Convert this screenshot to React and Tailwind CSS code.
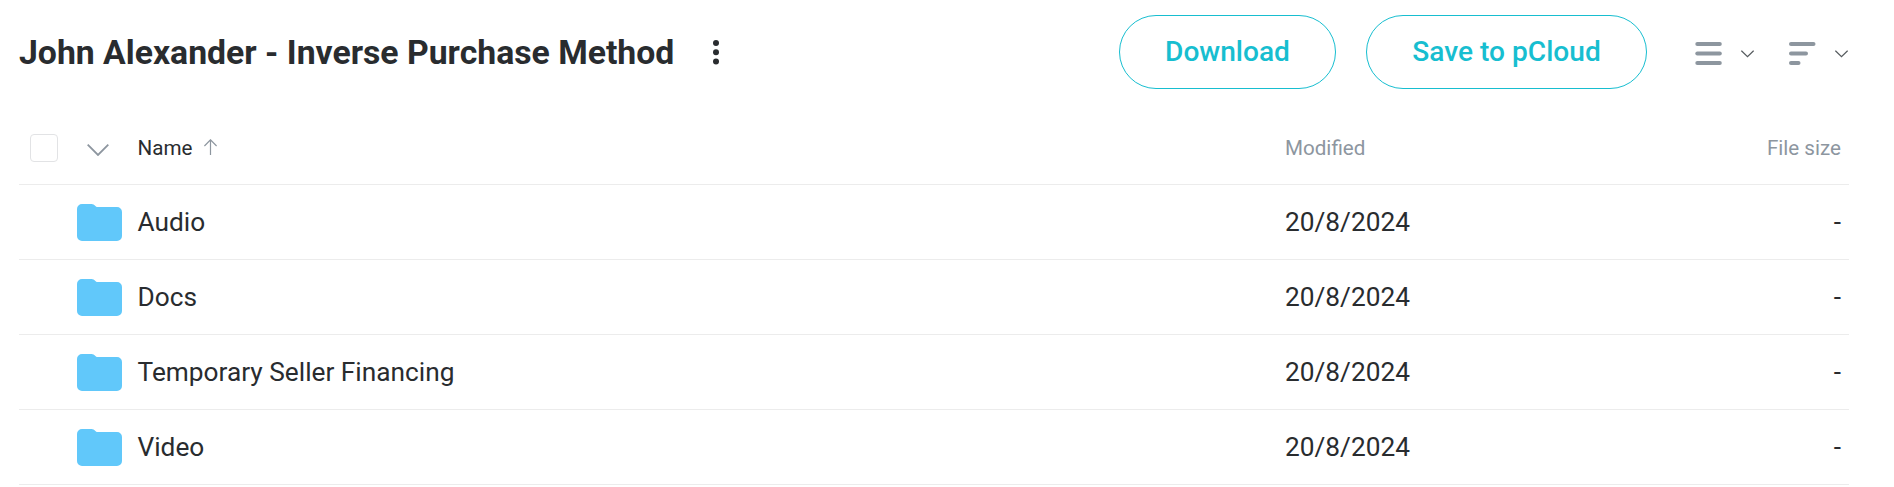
const folders = [
  { id: 1, name: "Audio", modified: "20/8/2024", size: "-" },
  { id: 2, name: "Docs", modified: "20/8/2024", size: "-" },
  { id: 3, name: "Temporary Seller Financing", modified: "20/8/2024", size: "-" },
  { id: 4, name: "Video", modified: "20/8/2024", size: "-" },
];

const FolderIcon = () => (
  <svg width="45" height="37" viewBox="0 0 45 37" fill="#61c8fa">
    <path d="M5 0h9.500c1.600 0 2.600.8 3.600 1.700.8.9 1.500 1.300 2.600 1.300H40a5 5 0 0 1 5 5v24a5 5 0 0 1-5 5H5a5 5 0 0 1-5-5V5a5 5 0 0 1 5-5z" />
  </svg>
);

const SmallChevron = () => (
  <svg width="13" height="8" viewBox="0 0 13 8" fill="none" stroke="#555a5e" strokeWidth="1.2">
    <path d="M0.400 0.700l6.100 6 6.100-6" />
  </svg>
);

const ListIcon = () => (
  <svg width="27" height="23" viewBox="0 0 27 23" fill="#8d969f">
    <rect x="0.300" width="26.500" height="4" rx="2" />
    <rect x="0.300" y="9.600" width="26.500" height="4" rx="2" />
    <rect x="0.300" y="19" width="26.500" height="4" rx="2" />
  </svg>
);

const SortIcon = () => (
  <svg width="27" height="23" viewBox="0 0 27 23" fill="#8d969f">
    <rect width="26.500" height="4" rx="2" />
    <rect y="9.600" width="19" height="4" rx="2" />
    <rect y="19" width="11.500" height="4" rx="2" />
  </svg>
);

const Toolbar = () => (
  <header className="flex h-[104px] items-center">
    <h1 className="pt-0.5 text-[33.75px] font-bold leading-none text-[#292c2f]">
      John Alexander - Inverse Purchase Method
    </h1>
    <button className="ml-[39px]" aria-label="More">
      <svg width="6" height="25" viewBox="0 0 6 25" fill="#292c2f">
        <circle cx="3" cy="3" r="3" />
        <circle cx="3" cy="12.300" r="3" />
        <circle cx="3" cy="21.600" r="3" />
      </svg>
    </button>
    <div className="ml-auto flex items-center text-[28.125px] font-medium text-[#17bed0]">
      <button className="h-[74px] w-[217px] rounded-full border border-[#17bed0]">Download</button>
      <button className="ml-[30px] h-[74px] w-[281px] rounded-full border border-[#17bed0]">
        Save to pCloud
      </button>
    </div>
    <button className="ml-12 mt-[3px] flex items-center gap-[19px]" aria-label="View">
      <ListIcon />
      <SmallChevron />
    </button>
    <button className="ml-[35px] mt-[3px] mr-px flex items-center gap-[19px]" aria-label="Sort">
      <SortIcon />
      <SmallChevron />
    </button>
  </header>
);

const App = () => {
  return (
    <div className="h-[487px] overflow-hidden bg-white pl-[19px] pr-[45px] font-['Roboto',sans-serif] text-[#292c2f]">
      <Toolbar />
      <div className="flex h-[81px] items-center border-b border-[#ececec] pt-2 pr-2 text-[20.625px]">
        <span className="ml-[11px] size-7 rounded-[4px] border border-[#e2e3e5]" />
        <svg className="ml-[29px] mt-1" width="22" height="12" viewBox="0 0 22 12" fill="none" stroke="#8d969f" strokeWidth="1.8">
          <path d="M0.700 0.700L11 11 21.300 0.700" />
        </svg>
        <span className="ml-[28.5px]">Name</span>
        <svg className="ml-3 mb-0.5" width="13" height="16" viewBox="0 0 13 16" fill="none" stroke="#8d969f" strokeWidth="1.2">
          <path d="M6.500 16V0.800M0.400 7L6.500 0.800 12.600 7" />
        </svg>
        <span className="ml-auto w-[472px] text-[#8d969f]">Modified</span>
        <span className="w-[84px] text-right text-[#8d969f]">File size</span>
      </div>
      {folders.map((folder) => (
        <div
          key={folder.id}
          className="flex h-[75px] items-center border-b border-[#ececec] pr-2 pl-[58px] text-[26.25px]"
        >
          <FolderIcon />
          <span className="ml-[15.5px] pt-0.5">{folder.name}</span>
          <span className="ml-auto w-[472px] pt-0.5">{folder.modified}</span>
          <span className="w-[84px] pt-0.5 text-right">{folder.size}</span>
        </div>
      ))}
    </div>
  );
};

export default App;
